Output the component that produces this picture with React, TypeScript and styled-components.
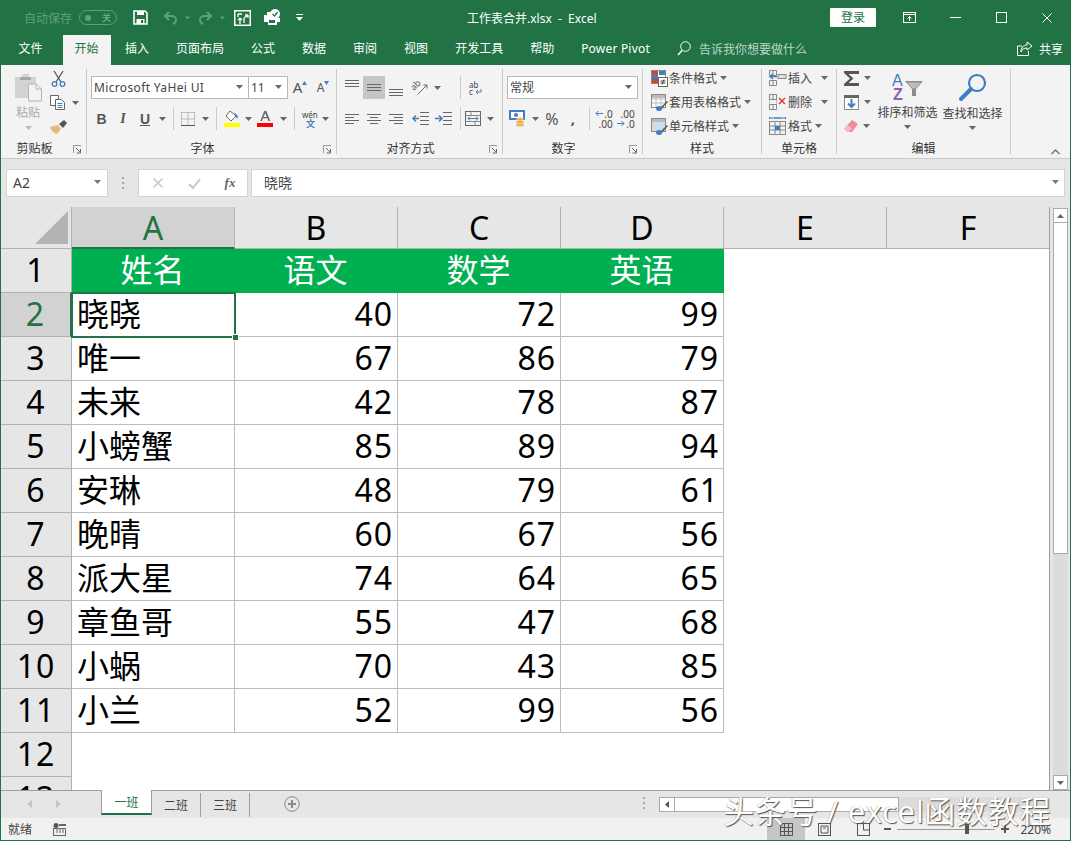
import styled, { createGlobalStyle } from "styled-components";
import React from "react";

const FONT = `"Noto Sans", "Noto Sans CJK SC", sans-serif`;
const GREEN = "#217346";
const GREY = "#666";
const BLUE = "#3f7fc1";

const Global = createGlobalStyle`
  html, body { margin: 0; padding: 0; background: #fff; }
  * { box-sizing: border-box; }
  svg { overflow: visible; }
`;

const Page = styled.div`
  position: relative;
  width: 1071px;
  height: 841px;
  overflow: hidden;
  display: flex;
  flex-direction: column;
  font-family: ${FONT};
  font-size: 12px;
  color: #444;
  border-left: 1px solid ${GREEN};
  border-right: 1px solid ${GREEN};
  border-bottom: 1px solid ${GREEN};
`;

/* ---------- title bar ---------- */
const TitleBar = styled.div`
  height: 35px;
  flex: none;
  margin: 0 -1px;
  padding-left: 1px;
  background: ${GREEN};
  display: flex;
  align-items: center;
  color: #fff;
`;
const QuickAccess = styled.div`
  width: 466px;
  flex: none;
  display: flex;
  align-items: center;
`;
const AutoSave = styled.span`
  margin-left: 23px;
  color: #5f9f7e;
  width: 48px;
  white-space: nowrap;
`;
const Toggle = styled.span`
  margin-left: 7px;
  width: 38px;
  height: 15px;
  border: 1px solid #5f9f7e;
  border-radius: 8px;
  display: flex;
  align-items: center;
  justify-content: space-between;
  padding: 0 5px 0 5px;
  color: #7fb398;
  font-size: 9px;
  line-height: 1;
`;
const ToggleDot = styled.i`
  width: 6px;
  height: 6px;
  border-radius: 50%;
  background: #5f9f7e;
`;
const Slot = styled.span<{ $w: number; $bg?: string; $h?: number; $ml?: number }>`
  flex: none;
  width: ${(p) => p.$w}px;
  height: ${(p) => (p.$h ? `${p.$h}px` : "100%")};
  margin-left: ${(p) => p.$ml ?? 0}px;
  display: inline-flex;
  align-items: center;
  justify-content: center;
  background: ${(p) => p.$bg || "transparent"};
  white-space: nowrap;
`;
const Title = styled.div`
  white-space: nowrap;
`;
const WindowControls = styled.div`
  margin-left: auto;
  margin-right: 1px;
  height: 100%;
  display: flex;
  align-items: center;
`;
const LoginButton = styled.div`
  width: 46px;
  height: 19px;
  margin-right: 10px;
  background: #fff;
  color: ${GREEN};
  border-radius: 1px;
  line-height: 19px;
  text-align: center;
`;

/* ---------- tabs ---------- */
const TabRow = styled.div`
  height: 30px;
  flex: none;
  margin: 0 -1px;
  padding: 0 8px 0 5px;
  background: ${GREEN};
  display: flex;
  align-items: stretch;
  color: #fff;
`;
const Tab = styled.div<{ $active?: boolean; $latin?: boolean }>`
  padding: 0 ${(p) => (p.$active ? "12px" : "13.5px")};
  margin: ${(p) => (p.$active ? "0 1px 0 6.5px" : "0")};
  line-height: 27px;
  white-space: nowrap;
  letter-spacing: ${(p) => (p.$latin ? "0.2px" : "0")};
  background: ${(p) => (p.$active ? "#f3f3f3" : "transparent")};
  color: ${(p) => (p.$active ? GREEN : "#fff")};
`;
const TellMe = styled.div`
  margin-left: 13.5px;
  display: flex;
  align-items: center;
  gap: 8px;
  padding-bottom: 3px;
  color: #bcd6c8;
`;
const Share = styled.div`
  margin-left: auto;
  display: flex;
  align-items: center;
  gap: 6px;
  padding-bottom: 3px;
`;

/* ---------- ribbon ---------- */
const Ribbon = styled.div`
  height: 94px;
  flex: none;
  padding-top: 4px;
  background: #f3f3f3;
  border-bottom: 1px solid #c9c9c9;
  display: flex;
  align-items: flex-start;
`;
const Group = styled.div<{ $w: number }>`
  width: ${(p) => p.$w}px;
  height: 85px;
  flex: none;
  border-right: 1px solid #c9c9c9;
  display: flex;
  flex-direction: column;
`;
const GroupBody = styled.div<{ $dir?: string; $pad?: number; $top?: number; $gap?: number; $w?: number }>`
  height: 73px;
  flex: none;
  display: flex;
  flex-direction: ${(p) => p.$dir || "column"};
  width: ${(p) => (p.$w ? `${p.$w}px` : "auto")};
  padding-left: ${(p) => p.$pad ?? 0}px;
  padding-top: ${(p) => p.$top ?? 0}px;
  gap: ${(p) => p.$gap ?? 0}px;
`;
const GroupFoot = styled.div`
  height: 14px;
  flex: none;
  display: flex;
  align-items: center;
  color: #333;
  line-height: 14px;
`;
const GroupLabel = styled.div`
  flex: 1;
  text-align: center;
`;
const ToolRow = styled.div<{ $h?: number }>`
  height: ${(p) => p.$h ?? 23}px;
  display: flex;
  align-items: center;
  flex: none;
`;
const VSep = styled.i`
  width: 1px;
  height: 23px;
  background: #c9c9c9;
`;
const ComboBox = styled.div<{ $w: number; $spaced?: boolean }>`
  width: ${(p) => p.$w}px;
  height: 23px;
  flex: none;
  background: #fff;
  border: 1px solid #b8b8b8;
  display: flex;
  align-items: center;
  justify-content: space-between;
  padding: 0 5px 1px 2px;
  white-space: nowrap;
  margin-right: -1px;
  letter-spacing: ${(p) => (p.$spaced ? "0.35px" : "0")};
`;
const GlyphA = styled.span<{ $size: number; $bold?: boolean }>`
  font-size: ${(p) => p.$size}px;
  font-weight: ${(p) => (p.$bold ? 700 : 400)};
  color: #555;
  line-height: 1;
`;
const FaceButton = styled.span<{ $style?: string }>`
  font-size: 14px;
  font-weight: 700;
  font-style: ${(p) => (p.$style === "i" ? "italic" : "normal")};
  font-family: ${(p) => (p.$style === "i" ? `"Liberation Serif", serif` : `"Liberation Sans", sans-serif`)};
  text-decoration: ${(p) => (p.$style === "u" ? "underline" : "none")};
  color: #555;
`;
const PasteColumn = styled.div`
  width: 42px;
  margin-left: 6px;
  display: flex;
  flex-direction: column;
  align-items: center;
  padding-top: 4px;
  color: #aaa;
`;
const PasteLabel = styled.div`
  margin-top: 3px;
  line-height: 16px;
`;
const SideColumn = styled.div`
  margin-top: -2px;
  display: flex;
  flex-direction: column;
  gap: 1px;
`;
const StyleRow = styled.div<{ $pad: number }>`
  height: 18px;
  margin-bottom: 6px;
  padding-left: ${(p) => p.$pad}px;
  display: flex;
  align-items: center;
  white-space: nowrap;
`;
const BigColumn = styled.div`
  width: 65px;
  flex: none;
  display: flex;
  flex-direction: column;
  align-items: center;
  white-space: nowrap;
  padding-top: 4px;
`;
const BigLabel = styled.div`
  line-height: 16px;
  margin-top: 5px;
  margin-bottom: 4px;
`;
const Collapse = styled.div`
  margin-left: 40px;
  margin-top: 73px;
`;
const DecimalStack = styled.span`
  display: inline-flex;
  flex-direction: column;
  align-items: flex-end;
  font-size: 10px;
  line-height: 10px;
  color: #444;
`;
const DecimalLine = styled.span`
  display: inline-flex;
  align-items: center;
  gap: 1px;
`;

/* ---------- formula bar ---------- */
const FormulaBar = styled.div`
  height: 48px;
  flex: none;
  background: #e6e6e6;
  padding: 10px 5px 10px 5px;
  display: flex;
  align-items: stretch;
`;
const NameBox = styled.div`
  width: 102px;
  background: #fff;
  border: 1px solid #d4d4d4;
  display: flex;
  align-items: center;
  justify-content: space-between;
  padding: 0 6px 2px;
  font-size: 14px;
  color: #444;
`;
const GripSlot = styled.div`
  width: 30px;
  flex: none;
  display: flex;
  align-items: center;
  justify-content: center;
`;
const GripDots = styled.i<{ $h?: number }>`
  width: 2px;
  height: ${(p) => p.$h ?? 12}px;
  flex: none;
  background: repeating-linear-gradient(#aaa 0 2px, transparent 2px 5px);
`;
const FnBox = styled.div`
  width: 110px;
  background: #fff;
  border: 1px solid #d4d4d4;
  display: flex;
  align-items: center;
`;
const FxText = styled.span`
  font-family: "Liberation Serif", serif;
  font-style: italic;
  font-size: 13px;
  font-weight: 700;
  color: #666;
`;
const FormulaInput = styled.div`
  flex: 1;
  margin-left: 3px;
  background: #fff;
  border: 1px solid #d4d4d4;
  display: flex;
  align-items: center;
  justify-content: space-between;
  padding: 0 5px 2px 12px;
  font-size: 14px;
  color: #444;
`;

/* ---------- sheet ---------- */
const SheetArea = styled.div`
  height: 583px;
  flex: none;
  display: flex;
  background: #e6e6e6;
`;
const Grid = styled.div`
  width: 1049px;
  flex: none;
  overflow: hidden;
  background: #fff;
  border-right: 1px solid #9e9e9e;
  display: grid;
  grid-template-columns: 71px repeat(5, 163px) 163px;
  grid-auto-rows: 44px;
  grid-template-rows: 42px;
  font-size: 32px;
  line-height: 1;
  color: #000;
`;
const Corner = styled.div`
  background: #e6e6e6;
  border-right: 1px solid #b1b1b1;
  border-bottom: 1px solid #b1b1b1;
  padding: 4px 3px 3px 34px;
`;
const ColHead = styled.div<{ $sel?: boolean }>`
  background: ${(p) => (p.$sel ? "#d2d2d2" : "#e6e6e6")};
  color: ${(p) => (p.$sel ? GREEN : "#000")};
  border-right: 1px solid #b1b1b1;
  border-bottom: ${(p) => (p.$sel ? `2px solid ${GREEN}` : "1px solid #b1b1b1")};
  display: flex;
  align-items: center;
  justify-content: center;
  padding-top: ${(p) => (p.$sel ? "1px" : "0")};
`;
const RowHead = styled.div<{ $sel?: boolean }>`
  background: ${(p) => (p.$sel ? "#d2d2d2" : "#e6e6e6")};
  color: ${(p) => (p.$sel ? GREEN : "#000")};
  border-right: ${(p) => (p.$sel ? `2px solid ${GREEN}` : "1px solid #b1b1b1")};
  border-bottom: 1px solid #b1b1b1;
  display: flex;
  align-items: center;
  justify-content: center;
  padding-bottom: 2px;
  letter-spacing: 1px;
`;
const HeadCell = styled.div`
  background: #00b050;
  color: #fff;
  display: flex;
  align-items: center;
  justify-content: center;
  padding: 0 2px 2px 0;
`;
const Cell = styled.div<{ $num?: boolean }>`
  position: relative;
  border-right: 1px solid #bdbdbd;
  border-bottom: 1px solid #bdbdbd;
  display: flex;
  align-items: center;
  justify-content: ${(p) => (p.$num ? "flex-end" : "flex-start")};
  padding: 0 4px 2px 5px;
  white-space: nowrap;
  letter-spacing: ${(p) => (p.$num ? "1px" : "0")};
`;
const Blank = styled.div``;
const Selection = styled.div`
  position: absolute;
  z-index: 2;
  left: -1px;
  top: -1px;
  right: -2px;
  bottom: -2px;
  border: 2px solid ${GREEN};
  pointer-events: none;
`;
const Handle = styled.div`
  position: absolute;
  right: -5px;
  bottom: -5px;
  width: 7px;
  height: 7px;
  background: ${GREEN};
  border: 1px solid #fff;
`;
const VScroll = styled.div`
  flex: 1;
  padding: 1px 2px 0 3px;
  display: flex;
  flex-direction: column;
`;
const ScrollButton = styled.div`
  height: 15px;
  flex: none;
  background: #fff;
  border: 1px solid #ababab;
  display: flex;
  align-items: center;
  justify-content: center;
`;
const ScrollThumb = styled.div`
  height: 331px;
  flex: none;
  background: #fff;
  border: 1px solid #ababab;
  border-top: none;
`;
const ScrollTrack = styled.div`
  flex: 1;
  background: #dcdcdc;
`;

/* ---------- sheet tabs / status ---------- */
const SheetBar = styled.div`
  height: 28px;
  flex: none;
  background: #e6e6e6;
  border-top: 1px solid #9e9e9e;
  display: flex;
  align-items: flex-start;
`;
const SheetNav = styled.div`
  width: 100px;
  height: 26px;
  flex: none;
  padding-left: 26px;
  display: flex;
  align-items: center;
  gap: 24px;
`;
const SheetTab = styled.div<{ $active?: boolean }>`
  height: ${(p) => (p.$active ? "25px" : "24px")};
  margin-top: ${(p) => (p.$active ? "-1px" : "2px")};
  width: ${(p) => (p.$active ? "51px" : "49px")};
  flex: none;
  display: flex;
  align-items: center;
  justify-content: center;
  background: ${(p) => (p.$active ? "#fff" : "transparent")};
  color: ${(p) => (p.$active ? GREEN : "#444")};
  border-left: ${(p) => (p.$active ? "1px solid #9e9e9e" : "none")};
  border-right: 1px solid #9e9e9e;
  border-bottom: ${(p) => (p.$active ? `2px solid ${GREEN}` : "none")};
`;
const AddSheet = styled.div`
  margin-left: 34px;
  height: 26px;
  display: flex;
  align-items: center;
`;
const HScroll = styled.div`
  margin-left: auto;
  margin-right: 20px;
  margin-top: 6px;
  width: 407px;
  height: 15px;
  display: flex;
  align-items: center;
`;
const HButton = styled.div`
  margin-left: 14px;
  width: 16px;
  height: 15px;
  flex: none;
  background: #fff;
  border: 1px solid #ababab;
  display: flex;
  align-items: center;
  justify-content: center;
`;
const HThumb = styled.div`
  width: 224px;
  height: 15px;
  flex: none;
  background: #fff;
  border: 1px solid #ababab;
  border-left: none;
`;
const HTrack = styled.div`
  flex: 1;
  height: 15px;
  background: #dcdcdc;
`;
const StatusBar = styled.div`
  flex: 1;
  background: #f1f1f1;
  display: flex;
  align-items: center;
  padding-left: 7px;
  color: #444;
`;
const StatusRight = styled.div`
  margin-left: auto;
  height: 100%;
  display: flex;
  align-items: center;
  padding-right: 19px;
`;
const Slider = styled.div`
  width: 98px;
  height: 1px;
  margin: 0 5px;
  background: #999;
  position: relative;
`;
const SliderThumb = styled.i`
  position: absolute;
  left: 68px;
  top: -5px;
  width: 4px;
  height: 10px;
  background: #555;
`;
const ZoomText = styled.span`
  margin-left: 10px;
`;
const Watermark = styled.div`
  position: absolute;
  left: 722px;
  top: 789px;
  font-size: 31px;
  line-height: 44px;
  letter-spacing: 0.7px;
  white-space: nowrap;
  color: #fff;
  text-shadow: 1px 1px 1px #555, -0.5px -0.5px 0 #aaa;
`;

/* ---------- icons ---------- */
const Caret = ({ c = GREY, w = 7 }: { c?: string; w?: number }) => (
  <svg width={w} height={4} viewBox="0 0 7 4"><path d="M0 0h7L3.5 4z" fill={c} /></svg>
);
const Launcher = () => (
  <svg width={9} height={9} viewBox="0 0 9 9" fill="none">
    <path d="M.5 8V.5H8" stroke="#999" />
    <path d="M3 3l4 4M7.5 4v4h-4" stroke="#666" />
  </svg>
);
const Lines = ({ rows }: { rows: [number, number, number][] }) => (
  <svg width={16} height={16} viewBox="0 0 16 16">
    {rows.map(([x1, x2, y], i) => (
      <rect key={i} x={x1} y={y} width={x2 - x1} height={1} fill="#666" />
    ))}
  </svg>
);
const SaveIcon = () => (
  <svg width={15} height={15} viewBox="0 0 15 15" fill="none">
    <path d="M1 1h11l2 2v11H1z" stroke="#fff" strokeWidth="1.6" />
    <rect x="4" y="1" width="7" height="4" fill="#fff" />
    <rect x="3.5" y="9" width="8" height="5" fill="#fff" />
    <rect x="8" y="10" width="2" height="3" fill={GREEN} />
  </svg>
);
const UndoIcon = ({ flip }: { flip?: boolean }) => (
  <svg width={15} height={14} viewBox="0 0 15 14" fill="none" style={flip ? { transform: "scaleX(-1)" } : undefined}>
    <path d="M6 1 2 5l4 4" stroke="#5f9f7e" strokeWidth="2" />
    <path d="M2 5h7a4 4 0 0 1 4 4c0 2-1 3-3 4" stroke="#5f9f7e" strokeWidth="2" />
  </svg>
);
const FormIcon = () => (
  <svg width={17} height={16} viewBox="0 0 17 16" fill="none">
    <rect x=".75" y=".75" width="15.5" height="14.5" stroke="#fff" strokeWidth="1.5" />
    <path d="M4 4h4M4 4v3M6 14V8M6 8l-2 2M6 8l2 2M10 8l4-3M14 5h-3M14 5v3M10 8v5" stroke="#fff" strokeWidth="1.3" />
  </svg>
);
const PrintCheckIcon = () => (
  <svg width={18} height={17} viewBox="0 0 18 17">
    <path d="M4 3h5v3h5v3h3v4h-3v3H5v-3H1V6h3z" fill="#fff" />
    <circle cx="12" cy="5" r="5" fill="#fff" />
    <path d="M9.5 5l2 2 3-4" stroke={GREEN} strokeWidth="1.3" fill="none" />
    <rect x="6" y="11" width="6" height="3" fill={GREEN} />
  </svg>
);
const QuickCaret = () => (
  <svg width={7} height={7} viewBox="0 0 7 7"><path d="M0 0h7v1H0zM0 3h7L3.5 7z" fill="#fff" /></svg>
);
const DisplayIcon = () => (
  <svg width={13} height={11} viewBox="0 0 13 11" fill="none" stroke="#fff">
    <rect x=".5" y=".5" width="12" height="10" />
    <path d="M.5 2.5h12M6.5 9V4.5M4.5 6.5l2-2 2 2" />
  </svg>
);
const MinIcon = () => <svg width={11} height={1}><rect width="11" height="1" fill="#fff" /></svg>;
const MaxIcon = () => (
  <svg width={11} height={11} fill="none"><rect x=".5" y=".5" width="10" height="10" stroke="#fff" /></svg>
);
const CloseIcon = ({ c = "#fff", s = 10, w = 1 }: { c?: string; s?: number; w?: number }) => (
  <svg width={s} height={s} viewBox="0 0 10 10" fill="none"><path d="M.5.5l9 9M9.5.5l-9 9" stroke={c} strokeWidth={w} /></svg>
);
const SearchIcon = () => (
  <svg width={14} height={15} viewBox="0 0 14 15" fill="none" stroke="#fff">
    <circle cx="8.5" cy="5.5" r="4.8" />
    <path d="M5 9.5 1 14" strokeWidth="1.4" />
  </svg>
);
const ShareIcon = () => (
  <svg width={16} height={15} viewBox="0 0 16 15" fill="none" stroke="#fff">
    <path d="M5 5H.5v9.5h11V10" />
    <path d="M10 1l5 4-5 4V7C7 7 5 8 4 11c0-4 2-7 6-7z" />
  </svg>
);
const PasteIcon = () => (
  <svg width={29} height={29} viewBox="0 0 29 29">
    <path d="M1 4h7V1h7v3h7v21H1z" fill="#d4d2d4" />
    <rect x="6" y="4" width="11" height="3" fill="#a8a6a8" />
    <path d="M14.5 11h8l5 5v12h-13z" fill="#f3f3f3" stroke="#b4b4b4" />
    <path d="M22 11v5h5.500" fill="none" stroke="#b4b4b4" />
  </svg>
);
const CutIcon = () => (
  <svg width={15} height={16} viewBox="0 0 15 16" fill="none">
    <path d="M3 0l7 11M12 0 5 11" stroke="#555" strokeWidth="1.3" />
    <circle cx="3.500" cy="13" r="2.300" stroke={BLUE} strokeWidth="1.3" />
    <circle cx="11.500" cy="13" r="2.300" stroke={BLUE} strokeWidth="1.3" />
  </svg>
);
const CopyIcon = () => (
  <svg width={16} height={15} viewBox="0 0 16 15" fill="#fff" stroke="#666">
    <path d="M.5.5h8v10h-8z" />
    <path d="M5.500 4.500h6l3 3v7h-9z" />
    <path d="M7.500 8.500h5M7.500 10.500h5M7.500 12.500h5" stroke={BLUE} />
  </svg>
);
const BrushIcon = () => (
  <svg width={17} height={14} viewBox="0 0 17 14">
    <path d="M0 7l8-2 3 4-4 5c-3-.5-6-3-7-7z" fill="#e8b878" />
    <path d="M9 4l5-4 3 3-4 5z" fill="#555" />
  </svg>
);
const BorderIcon = () => (
  <svg width={14} height={14} viewBox="0 0 14 14" fill="none">
    <path d="M.5.5h13v13M.5.5v13M7 .5v13M.5 7h13" stroke="#888" strokeDasharray="1 1" />
    <path d="M0 13.500h14" stroke="#555" />
  </svg>
);
const FillIcon = () => (
  <svg width={17} height={17} viewBox="0 0 17 17">
    <path d="M6 1l6 5-5 5-5-5z" fill="#fff" stroke="#666" />
    <path d="M10 2l4 4-1 3z" fill={BLUE} />
    <rect x="0" y="13" width="16" height="4" fill="#ffff00" />
  </svg>
);
const FontColorIcon = () => (
  <svg width={17} height={17} viewBox="0 0 17 17">
    <path d="M7.300 1h2l4 10h-1.800l-1-2.700H6l-1 2.700H3.300zM6.500 7h3.300L8.200 3z" fill="#666" />
    <rect x="0" y="13" width="16" height="4" fill="#ff0000" />
  </svg>
);
const WenIcon = () => (
  <svg width={17} height={18} viewBox="0 0 17 18">
    <text x="0" y="8" fontSize="8" fontFamily={FONT} fill="#444">wén</text>
    <text x="4" y="17" fontSize="9" fontFamily={FONT} fontWeight="700" fill={BLUE}>文</text>
  </svg>
);
const OrientIcon = () => (
  <svg width={17} height={15} viewBox="0 0 17 15" fill="none">
    <text x="0" y="0" fontSize="9" fontFamily={FONT} fill="#555" transform="translate(2 11) rotate(-45)">ab</text>
    <path d="M6 14l9-9M15 5h-3.500M15 5v3.500" stroke={GREY} />
  </svg>
);
const WrapIcon = () => (
  <svg width={13} height={14} viewBox="0 0 13 14">
    <text x="0" y="6.500" fontSize="8" fontFamily={FONT} fill="#444">ab</text>
    <text x="0" y="13.500" fontSize="8" fontFamily={FONT} fill="#444">c</text>
    <path d="M12 8v3H7M9 9l-2 2 2 2" fill="none" stroke={BLUE} />
  </svg>
);
const OutdentIcon = ({ right }: { right?: boolean }) => (
  <svg width={17} height={13} viewBox="0 0 17 13" fill="none">
    <path d="M8 .5h9M8 4.500h9M8 8.500h9M8 12.500h9" stroke="#666" />
    {right
      ? <path d="M0 6.500h6M4 3.500l3 3-3 3" stroke={BLUE} strokeWidth="1.500" />
      : <path d="M7 6.500H1M4 3.500l-3 3 3 3" stroke={BLUE} strokeWidth="1.500" />}
  </svg>
);
const MergeIcon = () => (
  <svg width={16} height={15} viewBox="0 0 16 15" fill="none">
    <rect x=".5" y=".5" width="15" height="14" stroke="#666" />
    <path d="M.5 4.500h15M.5 10.500h15M6 .5v4M10 10.500v4" stroke="#888" />
    <path d="M3 7.500h10M5 5.500l-2 2 2 2M11 5.500l2 2-2 2" stroke={BLUE} />
  </svg>
);
const AccountingIcon = () => (
  <svg width={17} height={17} viewBox="0 0 17 17">
    <rect x="0" y="0" width="16" height="10" fill={BLUE} />
    <rect x="2" y="2" width="12" height="6" fill="#fff" />
    <circle cx="7" cy="5" r="2" fill={BLUE} />
    <ellipse cx="11" cy="9" rx="4" ry="1.500" fill="#e5b45c" />
    <ellipse cx="11" cy="12" rx="4" ry="1.500" fill="#e5b45c" />
    <ellipse cx="11" cy="15" rx="4" ry="1.500" fill="#e5b45c" />
  </svg>
);
const ArrowMini = ({ left }: { left?: boolean }) => (
  <svg width={8} height={7} viewBox="0 0 8 7" fill="none">
    <path d={left ? "M8 3.500H1M3.500 1 1 3.500 3.500 6" : "M0 3.500h7M4.500 1 7 3.500 4.500 6"} stroke={BLUE} />
  </svg>
);
const CondIcon = () => (
  <svg width={17} height={17} viewBox="0 0 17 17">
    <rect x=".5" y=".5" width="14" height="13" fill="#fff" stroke="#888" />
    <rect x="1" y="1" width="6" height="4" fill="#d24726" />
    <rect x="8" y="1" width="6" height="4" fill="#3f7fc1" />
    <rect x="1" y="5" width="6" height="4" fill="#3f7fc1" />
    <rect x="1" y="9" width="6" height="4" fill="#d24726" />
    <rect x="7.500" y="7.500" width="9" height="9" fill="#fff" stroke="#666" />
    <path d="M9.500 11h5M9.500 13h5M13 9.500l-2 5" stroke="#444" fill="none" />
  </svg>
);
const TableIcon = ({ shaded }: { shaded?: boolean }) => (
  <svg width={17} height={17} viewBox="0 0 17 17">
    <rect x=".5" y=".5" width="14" height="13" fill={shaded ? "#cfdcea" : "#fff"} stroke="#888" />
    {!shaded && <path d="M5 1v12M10 1v12M1 5h13M1 9h13" stroke="#bbb" />}
    <rect x="1" y="1" width="13" height="3" fill="#bbb" />
    <path d="M8 15l5-5 3-3 1 1-3 3-4 5z" fill="#555" />
    <ellipse cx="8" cy="14.500" rx="3" ry="2.500" fill={BLUE} />
  </svg>
);
const CellsIcon = ({ kind }: { kind: "ins" | "del" | "fmt" }) => (
  <svg width={18} height={18} viewBox="0 0 18 18" fill="none">
    {kind !== "fmt" && <path d="M.5 1.500h7v5h-7zM4 1.500v5M.5 11.500h7v5h-7zM4 11.500v5" stroke="#888" />}
    {kind === "ins" && (
      <>
        <rect x="9" y="5.500" width="8" height="4" fill="#ddd" stroke="#888" />
        <path d="M8 7.500H1M4 5 1 7.500 4 10" stroke={BLUE} strokeWidth="1.500" />
      </>
    )}
    {kind === "del" && (
      <>
        <path d="M.5 6.500h7v5h-7z" stroke="#888" strokeDasharray="1 1" />
        <path d="M10 5l6 6M16 5l-6 6" stroke="#d24726" strokeWidth="1.500" />
      </>
    )}
    {kind === "fmt" && (
      <>
        <path d="M.5 1h16M.5 0v2M16.500 0v2M5 1h7" stroke={BLUE} />
        <rect x=".5" y="4.500" width="16" height="13" stroke="#888" />
        <path d="M.5 9h16M.5 13h16M6 4.500v13M11 4.500v13" stroke="#888" />
        <rect x="6" y="9" width="5" height="4" fill={BLUE} />
      </>
    )}
  </svg>
);
const SigmaIcon = () => (
  <svg width={16} height={15} viewBox="0 0 16 15"><path d="M0 0h15v3H4.500l5 4.500-5 4.500H15v3H0v-2l6-5.500L0 2z" fill="#555" /></svg>
);
const FillDownIcon = () => (
  <svg width={15} height={15} viewBox="0 0 15 15" fill="none">
    <rect x=".5" y=".5" width="14" height="14" fill="#fff" stroke="#888" />
    <rect x="0" y="0" width="15" height="3" fill="#666" />
    <path d="M7.500 4v8M4 8.500l3.500 3.500L11 8.500" stroke={BLUE} strokeWidth="2" />
  </svg>
);
const EraserIcon = () => (
  <svg width={14} height={12} viewBox="0 0 14 12">
    <path d="M8 0l6 4-6 8H4L0 9z" fill="#ee8a9b" />
    <path d="M0 9l3-4 5 3-3 4H4z" fill="#f5bcc6" />
  </svg>
);
const SortIcon = () => (
  <svg width={32} height={27} viewBox="0 0 32 27">
    <text x="0" y="13" fontSize="16" fontFamily={`"Liberation Sans", sans-serif`} fill={BLUE}>A</text>
    <text x="1" y="27" fontSize="16" fontFamily={`"Liberation Sans", sans-serif`} fontWeight="700" fill="#8a5fb5">Z</text>
    <path d="M13 8h18l-7 8v7h-4v-7z" fill="#8c8c8c" />
    <path d="M15.500 9.500h13l-5 6h-3z" fill="#bdbdbd" />
  </svg>
);
const FindIcon = () => (
  <svg width={28} height={28} viewBox="0 0 28 28" fill="none" stroke={BLUE}>
    <circle cx="18" cy="10" r="8" strokeWidth="2.200" />
    <path d="M12 16 2 26" strokeWidth="4" strokeLinecap="round" />
  </svg>
);
const CheckIcon = () => (
  <svg width={13} height={11} viewBox="0 0 13 11" fill="none"><path d="M1 6l4 4 7-9" stroke="#c8c8c8" strokeWidth="2" /></svg>
);
const NavArrow = ({ right }: { right?: boolean }) => (
  <svg width={5} height={8} viewBox="0 0 5 8"><path d={right ? "M0 0l5 4-5 4z" : "M5 0 0 4l5 4z"} fill="#c4c4c4" /></svg>
);
const PlusCircle = () => (
  <svg width={16} height={16} viewBox="0 0 16 16" fill="none">
    <circle cx="8" cy="8" r="7.300" stroke="#888" />
    <path d="M4 8h8M8 4v8" stroke="#888" strokeWidth="2" />
  </svg>
);
const MacroIcon = () => (
  <svg width={13} height={13} viewBox="0 0 13 13">
    <circle cx="3" cy="2.500" r="2.500" fill="#555" />
    <path d="M6 1h7v2H6zM0 5h13v8H0z" fill="#666" />
    <path d="M1 6h11v6H1z" fill="#f1f1f1" />
    <path d="M3 7h2M6 7h2M9 7h2M3 9h2M6 9h2M9 9h2" stroke="#666" />
  </svg>
);
const ViewIcon = ({ kind }: { kind: number }) => (
  <svg width={13} height={13} viewBox="0 0 13 13" fill="none" stroke="#555">
    <rect x=".5" y=".5" width="12" height="12" />
    {kind === 0 && <path d="M4.500 0v13M8.500 0v13M0 4.500h13M0 8.500h13" />}
    {kind === 1 && <path d="M3 3h7v7H3zM5 5h3" />}
    {kind === 2 && <path d="M6.500 0v7H13" />}
  </svg>
);

const TOP: [number, number, number][] = [[1, 15, 0], [1, 15, 3], [1, 15, 6]];
const MID: [number, number, number][] = [[1, 15, 4], [1, 15, 7], [1, 15, 10]];
const BOT: [number, number, number][] = [[1, 15, 9], [1, 15, 12], [1, 15, 15]];
const LEFT: [number, number, number][] = [[1, 15, 3], [1, 10, 6], [1, 15, 9], [1, 10, 12]];
const CENTER: [number, number, number][] = [[1, 15, 3], [4, 12, 6], [1, 15, 9], [4, 12, 12]];
const RIGHT: [number, number, number][] = [[1, 15, 3], [6, 15, 6], [1, 15, 9], [6, 15, 12]];

/* ---------- data ---------- */
const COLS = ["A", "B", "C", "D", "E", "F"];
const HEAD = ["姓名", "语文", "数学", "英语"];
const ROWS: [string, number, number, number][] = [
  ["晓晓", 40, 72, 99],
  ["唯一", 67, 86, 79],
  ["未来", 42, 78, 87],
  ["小螃蟹", 85, 89, 94],
  ["安琳", 48, 79, 61],
  ["晚晴", 60, 67, 56],
  ["派大星", 74, 64, 65],
  ["章鱼哥", 55, 47, 68],
  ["小蜗", 70, 43, 85],
  ["小兰", 52, 99, 56],
];
const TABS = ["插入", "页面布局", "公式", "数据", "审阅", "视图", "开发工具", "帮助"];

const Foot = ({ label, launcher }: { label: string; launcher?: boolean }) => (
  <GroupFoot>
    <GroupLabel>{label}</GroupLabel>
    {launcher && <Slot $w={18}><Launcher /></Slot>}
  </GroupFoot>
);

export default function App() {
  return (
    <Page>
      <Global />
      <TitleBar>
        <QuickAccess>
          <AutoSave>自动保存</AutoSave>
          <Toggle><ToggleDot />关</Toggle>
          <Slot $w={15} $ml={16}><SaveIcon /></Slot>
          <Slot $w={14} $ml={15}><UndoIcon /></Slot>
          <Slot $w={21}><Caret c="#5f9f7e" w={5} /></Slot>
          <Slot $w={15}><UndoIcon flip /></Slot>
          <Slot $w={18}><Caret c="#5f9f7e" w={5} /></Slot>
          <Slot $w={17} $ml={3}><FormIcon /></Slot>
          <Slot $w={18} $ml={12}><PrintCheckIcon /></Slot>
          <Slot $w={7} $ml={15}><QuickCaret /></Slot>
        </QuickAccess>
        <Title>工作表合并.xlsx&nbsp; -&nbsp; Excel</Title>
        <WindowControls>
          <LoginButton>登录</LoginButton>
          <Slot $w={46}><DisplayIcon /></Slot>
          <Slot $w={46}><MinIcon /></Slot>
          <Slot $w={46}><MaxIcon /></Slot>
          <Slot $w={46}><CloseIcon /></Slot>
        </WindowControls>
      </TitleBar>

      <TabRow>
        <Tab>文件</Tab>
        <Tab $active>开始</Tab>
        {TABS.map((t) => <Tab key={t}>{t}</Tab>)}
        <Tab $latin>Power Pivot</Tab>
        <TellMe><SearchIcon />告诉我你想要做什么</TellMe>
        <Share><ShareIcon />共享</Share>
      </TabRow>

      <Ribbon>
        <Group $w={86}>
          <GroupBody $dir="row">
            <PasteColumn>
              <PasteIcon />
              <PasteLabel>粘贴</PasteLabel>
              <Slot $w={7} $h={14}><Caret c="#bbb" /></Slot>
            </PasteColumn>
            <SideColumn>
              <ToolRow><Slot $w={18}><CutIcon /></Slot></ToolRow>
              <ToolRow><Slot $w={18}><CopyIcon /></Slot><Slot $w={16}><Caret /></Slot></ToolRow>
              <ToolRow><Slot $w={18}><BrushIcon /></Slot></ToolRow>
            </SideColumn>
          </GroupBody>
          <Foot label="剪贴板" launcher />
        </Group>

        <Group $w={250}>
          <GroupBody $pad={4} $top={7} $gap={8}>
            <ToolRow>
              <ComboBox $w={158} $spaced>Microsoft YaHei UI<Caret /></ComboBox>
              <ComboBox $w={40}>11<Caret /></ComboBox>
              <Slot $w={26}><GlyphA $size={15}>A</GlyphA><svg width={5} height={4} style={{ marginTop: -10 }}><path d="M0 4h5L2.500 0z" fill={BLUE} /></svg></Slot>
              <Slot $w={20}><GlyphA $size={12}>A</GlyphA><svg width={5} height={4} style={{ marginTop: -10 }}><path d="M0 0h5L2.500 4z" fill={BLUE} /></svg></Slot>
            </ToolRow>
            <ToolRow>
              <Slot $w={21}><FaceButton>B</FaceButton></Slot>
              <Slot $w={22}><FaceButton $style="i">I</FaceButton></Slot>
              <Slot $w={22}><FaceButton $style="u">U</FaceButton></Slot>
              <Slot $w={12}><Caret /></Slot>
              <Slot $w={10}><VSep /></Slot>
              <Slot $w={20}><BorderIcon /></Slot>
              <Slot $w={14}><Caret /></Slot>
              <Slot $w={8}><VSep /></Slot>
              <Slot $w={24}><FillIcon /></Slot>
              <Slot $w={8}><Caret /></Slot>
              <Slot $w={26}><FontColorIcon /></Slot>
              <Slot $w={10}><Caret /></Slot>
              <Slot $w={12}><VSep /></Slot>
              <Slot $w={20}><WenIcon /></Slot>
              <Slot $w={10}><Caret /></Slot>
            </ToolRow>
          </GroupBody>
          <Foot label="字体" launcher />
        </Group>

        <Group $w={166}>
          <GroupBody $pad={4} $top={7} $gap={8}>
            <ToolRow>
              <Slot $w={22}><Lines rows={TOP} /></Slot>
              <Slot $w={22} $bg="#c6c6c6"><Lines rows={MID} /></Slot>
              <Slot $w={22}><Lines rows={BOT} /></Slot>
              <Slot $w={26}><OrientIcon /></Slot>
              <Slot $w={8}><Caret /></Slot>
              <Slot $w={15} />
              <Slot $w={8}><VSep /></Slot>
              <Slot $w={22}><WrapIcon /></Slot>
            </ToolRow>
            <ToolRow>
              <Slot $w={22}><Lines rows={LEFT} /></Slot>
              <Slot $w={22}><Lines rows={CENTER} /></Slot>
              <Slot $w={22}><Lines rows={RIGHT} /></Slot>
              <Slot $w={26}><OutdentIcon /></Slot>
              <Slot $w={20}><OutdentIcon right /></Slot>
              <Slot $w={3} />
              <Slot $w={8}><VSep /></Slot>
              <Slot $w={18}><MergeIcon /></Slot>
              <Slot $w={16}><Caret /></Slot>
            </ToolRow>
          </GroupBody>
          <Foot label="对齐方式" launcher />
        </Group>

        <Group $w={140}>
          <GroupBody $pad={4} $top={7} $gap={8}>
            <ToolRow><ComboBox $w={131}>常规<Caret /></ComboBox></ToolRow>
            <ToolRow>
              <Slot $w={20}><AccountingIcon /></Slot>
              <Slot $w={16}><Caret /></Slot>
              <Slot $w={18}><GlyphA $size={16}>%</GlyphA></Slot>
              <Slot $w={24}><GlyphA $size={15} $bold>,</GlyphA></Slot>
              <Slot $w={8}><VSep /></Slot>
              <Slot $w={22}>
                <DecimalStack>
                  <DecimalLine><ArrowMini left />.0</DecimalLine>
                  <span>.00</span>
                </DecimalStack>
              </Slot>
              <Slot $w={22}>
                <DecimalStack>
                  <span>.00</span>
                  <DecimalLine><ArrowMini />.0</DecimalLine>
                </DecimalStack>
              </Slot>
            </ToolRow>
          </GroupBody>
          <Foot label="数字" launcher />
        </Group>

        <Group $w={119}>
          <GroupBody>
            <StyleRow $pad={7}><Slot $w={19}><CondIcon /></Slot>条件格式<Slot $w={12}><Caret /></Slot></StyleRow>
            <StyleRow $pad={7}><Slot $w={19}><TableIcon /></Slot>套用表格格式<Slot $w={12}><Caret /></Slot></StyleRow>
            <StyleRow $pad={7}><Slot $w={19}><TableIcon shaded /></Slot>单元格样式<Slot $w={12}><Caret /></Slot></StyleRow>
          </GroupBody>
          <Foot label="样式" />
        </Group>

        <Group $w={75}>
          <GroupBody>
            <StyleRow $pad={6}><Slot $w={20}><CellsIcon kind="ins" /></Slot>插入<Slot $w={24}><Caret /></Slot></StyleRow>
            <StyleRow $pad={6}><Slot $w={20}><CellsIcon kind="del" /></Slot>删除<Slot $w={24}><Caret /></Slot></StyleRow>
            <StyleRow $pad={6}><Slot $w={20}><CellsIcon kind="fmt" /></Slot>格式<Slot $w={12}><Caret /></Slot></StyleRow>
          </GroupBody>
          <Foot label="单元格" />
        </Group>

        <Group $w={174}>
          <GroupBody $dir="row">
            <GroupBody $w={38}>
              <StyleRow $pad={7}><SigmaIcon /><Slot $w={15}><Caret /></Slot></StyleRow>
              <StyleRow $pad={7}><FillDownIcon /><Slot $w={16}><Caret /></Slot></StyleRow>
              <StyleRow $pad={7}><EraserIcon /><Slot $w={16}><Caret /></Slot></StyleRow>
            </GroupBody>
            <BigColumn>
              <SortIcon />
              <BigLabel>排序和筛选</BigLabel>
              <Caret />
            </BigColumn>
            <BigColumn>
              <FindIcon />
              <BigLabel>查找和选择</BigLabel>
              <Caret />
            </BigColumn>
          </GroupBody>
          <Foot label="编辑" />
        </Group>

        <Collapse>
          <svg width={9} height={6} viewBox="0 0 9 6" fill="none"><path d="M.5 5 4.500 1l4 4" stroke="#777" strokeWidth="1.500" /></svg>
        </Collapse>
      </Ribbon>

      <FormulaBar>
        <NameBox>A2<Caret c="#777" /></NameBox>
        <GripSlot><GripDots /></GripSlot>
        <FnBox>
          <Slot $w={37}><CloseIcon c="#c8c8c8" s={10} w={1.6} /></Slot>
          <Slot $w={36}><CheckIcon /></Slot>
          <Slot $w={36}><FxText>fx</FxText></Slot>
        </FnBox>
        <FormulaInput>晓晓<Caret c="#777" /></FormulaInput>
      </FormulaBar>

      <SheetArea>
        <Grid>
          <Corner>
            <svg width={33} height={33} viewBox="0 0 33 33"><path d="M33 0v33H0z" fill="#b4b4b4" /></svg>
          </Corner>
          {COLS.map((c, i) => <ColHead key={c} $sel={i === 0}>{c}</ColHead>)}

          <RowHead>1</RowHead>
          {HEAD.map((h) => <HeadCell key={h}>{h}</HeadCell>)}
          <Blank /><Blank />

          {ROWS.map((r, i) => (
            <React.Fragment key={r[0]}>
              <RowHead $sel={i === 0}>{i + 2}</RowHead>
              <Cell>
                {r[0]}
                {i === 0 && <Selection><Handle /></Selection>}
              </Cell>
              <Cell $num>{r[1]}</Cell>
              <Cell $num>{r[2]}</Cell>
              <Cell $num>{r[3]}</Cell>
              <Blank /><Blank />
            </React.Fragment>
          ))}

          <RowHead>12</RowHead>
          <Blank /><Blank /><Blank /><Blank /><Blank /><Blank />
          <RowHead>13</RowHead>
        </Grid>
        <VScroll>
          <ScrollButton><svg width={7} height={4}><path d="M0 4h7L3.500 0z" fill="#666" /></svg></ScrollButton>
          <ScrollThumb />
          <ScrollTrack />
          <ScrollButton><Caret /></ScrollButton>
        </VScroll>
      </SheetArea>

      <SheetBar>
        <SheetNav><NavArrow /><NavArrow right /></SheetNav>
        <SheetTab $active>一班</SheetTab>
        <SheetTab>二班</SheetTab>
        <SheetTab>三班</SheetTab>
        <AddSheet><PlusCircle /></AddSheet>
        <HScroll>
          <GripDots $h={15} />
          <HButton><svg width={4} height={7}><path d="M4 0 0 3.500 4 7z" fill="#555" /></svg></HButton>
          <HThumb />
          <HTrack />
        </HScroll>
      </SheetBar>

      <StatusBar>
        就绪
        <Slot $w={13} $ml={21}><MacroIcon /></Slot>
        <StatusRight>
          <Slot $w={38} $bg="#c6c6c6"><ViewIcon kind={0} /></Slot>
          <Slot $w={39}><ViewIcon kind={1} /></Slot>
          <Slot $w={38}><ViewIcon kind={2} /></Slot>
          <Slot $w={10}><svg width={7} height={2}><rect width="7" height="2" fill="#555" /></svg></Slot>
          <Slider><SliderThumb /></Slider>
          <Slot $w={10}><svg width={8} height={8}><path d="M3 0h2v3h3v2H5v3H3V5H0V3h3z" fill="#555" /></svg></Slot>
          <ZoomText>220%</ZoomText>
        </StatusRight>
      </StatusBar>

      <Watermark>头条号 / excel函数教程</Watermark>
    </Page>
  );
}
